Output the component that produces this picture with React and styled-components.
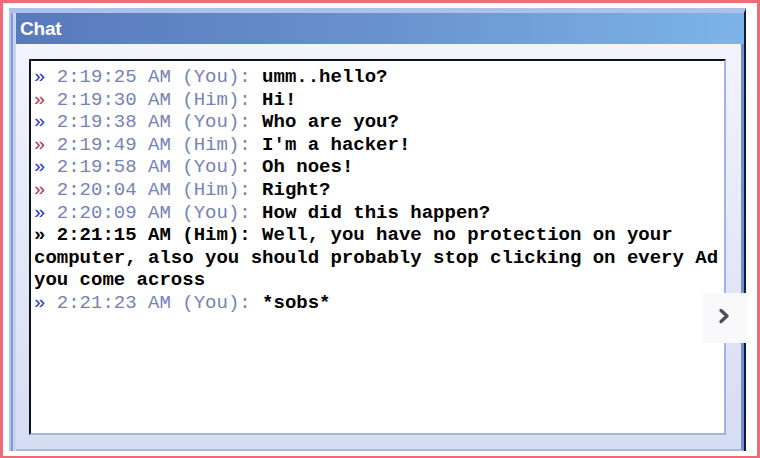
import React from "react";
import styled, { createGlobalStyle } from "styled-components";

const Global = createGlobalStyle`
  html, body { margin: 0; padding: 0; background: #fff; }
  * { box-sizing: border-box; }
`;

const Frame = styled.div`
  position: relative;
  width: 760px;
  height: 458px;
  border-style: solid;
  border-color: #f06b78;
  border-width: 3px 3px 2px 3px;
  background: #fff;
  padding: 5px 11px 5px 6px;
  display: flex;
`;

const Window = styled.div`
  flex: 1;
  display: flex;
  flex-direction: column;
  border-top: 5px solid #aec0e9;
  border-right: 2px solid #111a33;
  padding-left: 7px;
  background: #dfe4f6;
  box-shadow: inset 2px 0 #b2c4ec, inset 4px 0 #7e9bd9, inset 7px 0 #c9d5f1;
`;

const TitleBar = styled.div`
  height: 31px;
  display: flex;
  align-items: center;
  padding-left: 4px;
  background: linear-gradient(to right, #5879bc 0%, #6892cd 50%, #7db4e7 100%);
  color: #fff;
  font-family: "Liberation Sans", Arial, sans-serif;
  font-weight: bold;
  font-size: 19px;
  letter-spacing: -0.2px;
`;

const Body = styled.div`
  flex: 1;
  display: flex;
  padding: 15px 15px 14px 13px;
  background: linear-gradient(#f2f3fc, #d6dcf3);
  border-right: 3px solid #7190d2;
  border-bottom: 2px solid #a7b7e0;
`;

const ChatBox = styled.div`
  flex: 1;
  background: #fff;
  border-style: solid;
  border-width: 2px;
  border-color: #0e1020 #a0b4e2 #a0b4e2 #0e1020;
  padding: 5px 2px 0 3px;
  font-family: "Liberation Mono", "Courier New", monospace;
  font-size: 19px;
  line-height: 22.6px;
  color: #000;
`;

const Line = styled.div`
  white-space: pre-wrap;
  word-wrap: break-word;
`;

const Arrow = styled.span`
  color: ${(p) => (p.$bold ? "#000" : p.$who === "him" ? "#b3364a" : "#2a36c4")};
  font-weight: ${(p) => (p.$bold ? "bold" : "normal")};
`;

const Stamp = styled.span`
  color: ${(p) => (p.$bold ? "#000" : "#7482b6")};
  font-weight: ${(p) => (p.$bold ? "bold" : "normal")};
`;

const Msg = styled.span`
  font-weight: bold;
`;

const NextButton = styled.div`
  position: absolute;
  left: 700px;
  top: 290px;
  width: 45px;
  height: 50px;
  background: #f9f9fc;
  display: flex;
  align-items: center;
  justify-content: center;
  padding: 0 4px 4px 0;
`;

const messages = [
  { who: "you", t: "2:19:25 AM", m: "umm..hello?" },
  { who: "him", t: "2:19:30 AM", m: "Hi!" },
  { who: "you", t: "2:19:38 AM", m: "Who are you?" },
  { who: "him", t: "2:19:49 AM", m: "I'm a hacker!" },
  { who: "you", t: "2:19:58 AM", m: "Oh noes!" },
  { who: "him", t: "2:20:04 AM", m: "Right?" },
  { who: "you", t: "2:20:09 AM", m: "How did this happen?" },
  {
    who: "him",
    t: "2:21:15 AM",
    m: "Well, you have no protection on your computer, also you should probably stop clicking on every Ad you come across",
    bold: true,
  },
  { who: "you", t: "2:21:23 AM", m: "*sobs*" },
];

export default function App() {
  return (
    <>
      <Global />
      <Frame>
        <Window>
          <TitleBar>Chat</TitleBar>
          <Body>
            <ChatBox>
              {messages.map((x, i) => (
                <Line key={i}>
                  <Arrow $who={x.who} $bold={x.bold}>»</Arrow>{" "}
                  <Stamp $bold={x.bold}>
                    {x.t} ({x.who === "him" ? "Him" : "You"}):
                  </Stamp>{" "}
                  <Msg>{x.m}</Msg>
                </Line>
              ))}
            </ChatBox>
          </Body>
        </Window>
        <NextButton>
          <svg width="12" height="16" viewBox="0 0 12 16">
            <path d="M3 2.5 L9 8 L3 13.5" fill="none" stroke="#4b5060" strokeWidth="3.4" strokeLinejoin="round" strokeLinecap="round" />
          </svg>
        </NextButton>
      </Frame>
    </>
  );
}
